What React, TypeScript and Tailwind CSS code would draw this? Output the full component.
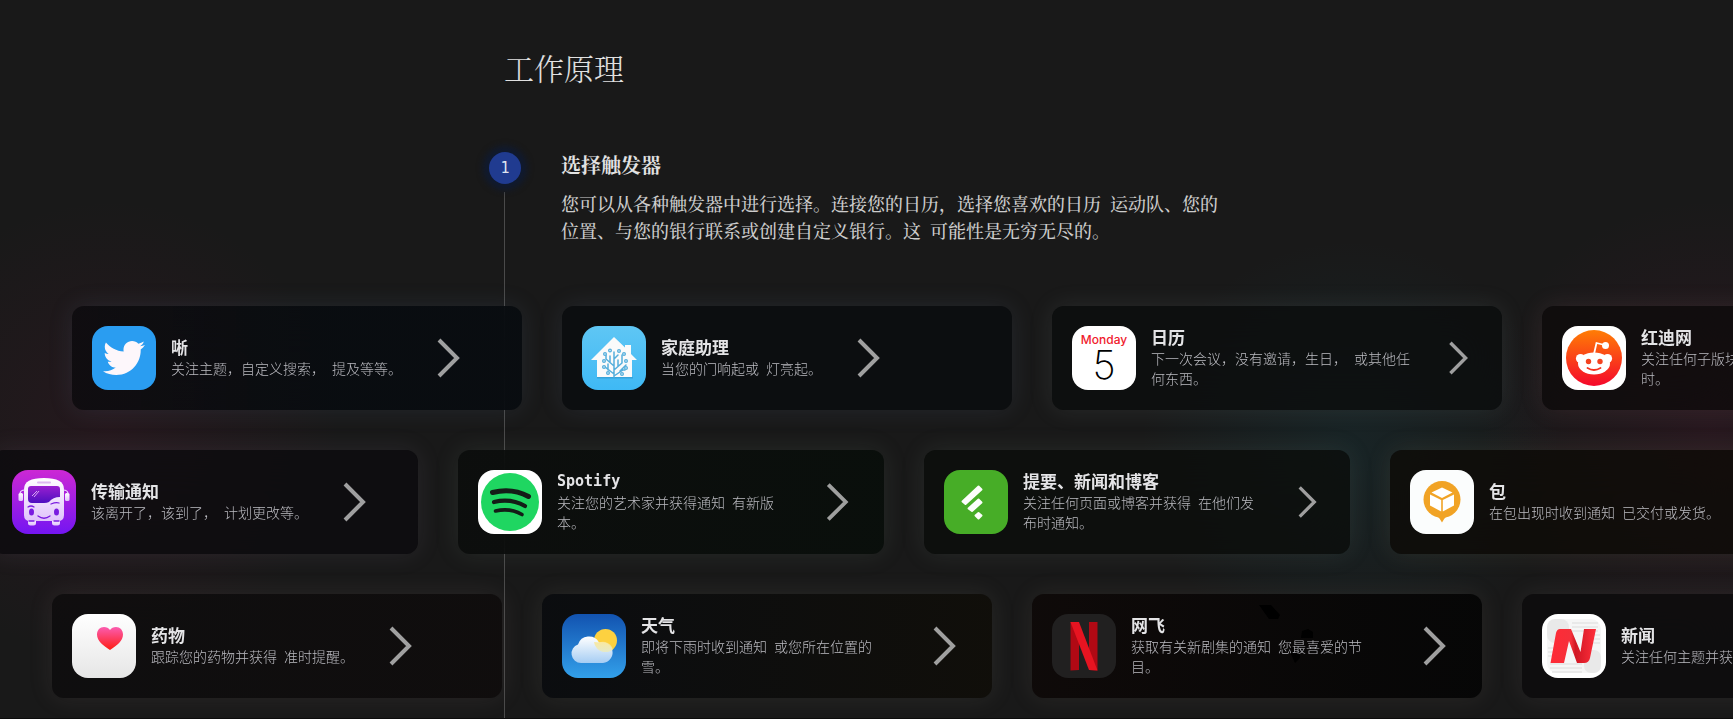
import type { ReactNode } from "react";
import { FaTwitter } from "react-icons/fa";

type Trigger = {
  title: string;
  text: string;
  icon: ReactNode;
  card: string;
  titleFont?: string;
  textWidth?: string;
  chevron?: string;
  decoration?: ReactNode;
};

const TwitterIcon = () => (
  <span className="flex size-16 items-center justify-center bg-[#2a9df1] text-[#fdf7fb]">
    <FaTwitter className="size-[42px]" />
  </span>
);

const HomeIcon = () => (
  <svg viewBox="0 0 64 64" className="size-16">
    <defs>
      <linearGradient id="home" x2="0" y2="1">
        <stop stopColor="#5fc6f4" />
        <stop offset="1" stopColor="#3fb9f5" />
      </linearGradient>
    </defs>
    <rect width="64" height="64" fill="url(#home)" />
    <path d="M15 51h36v1.500H15z" fill="#2b93c8" opacity=".6" />
    <path d="M32 11 L43 21.500 V19 H49 V28 L55 34 H50 V51 H15 V34 H9 Z" fill="#fafafa" />
    <g fill="none" stroke="#55aedb" strokeWidth="1.500" strokeLinecap="round">
      <path d="M32 51V26M32 40l-8-7v-4M32 48l-9-7h-2M32 44l8-7v-8M32 50l9-6h2M28 36v-6M36 40v-6M26 44v-6M38 45l6-6M32 33l4-4" />
    </g>
    <g fill="#d9effa" stroke="#55aedb" strokeWidth="1.200">
      <circle cx="28" cy="24.500" r="1.400" /><circle cx="37" cy="25" r="1.400" />
      <circle cx="23" cy="28" r="1.400" /><circle cx="42" cy="28" r="1.400" />
      <circle cx="22" cy="35" r="1.400" /><circle cx="44" cy="35" r="1.400" />
      <circle cx="22" cy="41" r="1.400" /><circle cx="44" cy="42" r="1.400" />
      <circle cx="26" cy="47" r="1.400" /><circle cx="40" cy="48" r="1.400" />
    </g>
  </svg>
);

const CalendarIcon = () => (
  <span className="flex size-16 flex-col items-center bg-white pt-1.5 font-['Liberation_Sans',sans-serif]">
    <span className="text-[12px] leading-4 font-medium font-[Inter,sans-serif] text-[#f0202c]">Monday</span>
    <span className="font-[Inter,sans-serif] text-[40px] leading-[34px] font-extralight text-black">5</span>
  </span>
);

const RedditIcon = () => (
  <svg viewBox="0 0 64 64" className="size-16">
    <defs>
      <linearGradient id="reddit" x2="0" y2="1">
        <stop stopColor="#ff7d05" />
        <stop offset="1" stopColor="#f5082b" />
      </linearGradient>
    </defs>
    <rect width="64" height="64" fill="#fff" />
    <circle cx="32" cy="32" r="28" fill="url(#reddit)" />
    <path d="M32 28l2.500-11 8 2" fill="none" stroke="#fff" strokeWidth="1.800" />
    <g fill="#fff">
      <circle cx="43.500" cy="19.500" r="3.500" />
      <circle cx="18.500" cy="32.500" r="4.600" />
      <circle cx="45.500" cy="32.500" r="4.600" />
      <ellipse cx="32" cy="37.500" rx="16" ry="11" />
    </g>
    <circle cx="26.500" cy="35.500" r="2.700" fill="#f4421f" />
    <circle cx="38" cy="35.500" r="2.700" fill="#f4421f" />
    <path d="M25.500 42q6.500 4 13 0" fill="none" stroke="#f4321f" strokeWidth="1.800" strokeLinecap="round" />
  </svg>
);

const BusIcon = () => (
  <svg viewBox="0 0 64 64" className="size-16">
    <defs>
      <linearGradient id="bus" x2="0" y2="1">
        <stop stopColor="#cc28d4" />
        <stop offset="1" stopColor="#7415f2" />
      </linearGradient>
      <linearGradient id="busBody" x2="0" y2="1">
        <stop stopColor="#fff" />
        <stop offset="1" stopColor="#e0c2fb" />
      </linearGradient>
      <linearGradient id="busGlass" x2="0" y2="1">
        <stop stopColor="#9a1fd0" />
        <stop offset="1" stopColor="#4e0fc0" />
      </linearGradient>
    </defs>
    <rect width="64" height="64" fill="url(#bus)" />
    <g fill="url(#busBody)">
      <path d="M16 48h8v5q0 2.500-2.500 2.500h-3q-2.500 0-2.500-2.500zM40 48h8v5q0 2.500-2.500 2.500h-3q-2.500 0-2.500-2.500z" />
      <path d="M12 19Q12 8 32 8T52 19V45Q52 51 46 51H18Q12 51 12 45Z" />
      <rect x="6.500" y="23" width="4.500" height="8" rx="1.500" />
      <rect x="53" y="23" width="4.500" height="8" rx="1.500" />
    </g>
    <path d="M13 20q-5 0-5 4M51 20q5 0 5 4" fill="none" stroke="#eedbff" strokeWidth="1.200" />
    <path d="M26 12.500h12" stroke="#ddb8f0" strokeWidth="2" strokeLinecap="round" />
    <path d="M16 19q0-3 3-3h26q3 0 3 3v8q-7 0-11 5-2 1-5 1H20q-4 0-4-4z" fill="url(#busGlass)" />
    <path d="M20 26l5-5M22 27l5-6" stroke="#d9a9f4" strokeWidth="1" />
    <g fill="#7a1be0">
      <ellipse cx="19.500" cy="42" rx="2.500" ry="3.600" />
      <ellipse cx="44.500" cy="42" rx="2.500" ry="3.600" />
    </g>
    <path d="M26 46q6 4.500 12 0M16 37q3-2 6 0M39 34q5-2 8-1M17 51h5M42 51h5" fill="none" stroke="#7a1be0" strokeWidth="1.300" strokeLinecap="round" />
  </svg>
);

const SpotifyIcon = () => (
  <svg viewBox="0 0 64 64" className="size-16">
    <rect width="64" height="64" fill="#fff" />
    <circle cx="32" cy="32" r="29" fill="#1fd661" />
    <g fill="none" stroke="#141d17" strokeLinecap="round">
      <path d="M14.500 22.500Q34 17.500 50.500 26.500" strokeWidth="5" />
      <path d="M16 32Q33 28 47 36" strokeWidth="4.300" />
      <path d="M17.500 41Q32 37.500 44 44.500" strokeWidth="3.600" />
    </g>
  </svg>
);

const FeedIcon = () => (
  <svg viewBox="0 0 64 64" className="size-16">
    <rect width="64" height="64" fill="#47ad27" />
    <g fill="#fcfefb" stroke="#fcfefb" strokeWidth="2" strokeLinejoin="round">
      <path d="M18.500 31.500L34.500 16.500L37.500 19.500L21.500 34Z" />
      <path d="M24.500 38.500L34.500 29.500L37.500 32.500L28 41Z" />
      <path d="M31.500 45.500L34.500 43L37.500 45.500L34.500 48.500Z" />
    </g>
  </svg>
);

const PackageIcon = () => (
  <svg viewBox="0 0 64 64" className="size-16">
    <rect width="64" height="64" fill="#fbfdfd" />
    <circle cx="32" cy="29.500" r="18.500" fill="#f1a325" />
    <path d="M22 43h20q-7 3-10 9.500q-3-6.500-10-9.500z" fill="#f1a325" />
    <g fill="#fff">
      <path d="M32 17.500l10.500 5L32 28l-10.500-5.500z" />
      <path d="M20 24.500l11.200 5.500v11.500L20 35.500z" />
      <path d="M44 24.500L32.800 30v11.500L44 35.500z" />
    </g>
  </svg>
);

const HealthIcon = () => (
  <svg viewBox="0 0 64 64" className="size-16">
    <defs>
      <linearGradient id="paper" x2="0" y2="1">
        <stop stopColor="#fff" />
        <stop offset="1" stopColor="#e6e6e6" />
      </linearGradient>
      <linearGradient id="heart" x2="0" y2="1">
        <stop stopColor="#fb5cb0" />
        <stop offset="1" stopColor="#fe1d12" />
      </linearGradient>
    </defs>
    <rect width="64" height="64" fill="url(#paper)" />
    <path d="M38 36C31 31.500 25 27 25 20.500C25 16 28 13 32 13C34.500 13 36.800 14.300 38 16C39.200 14.300 41.500 13 44 13C48 13 51 16 51 20.500C51 27 45 31.500 38 36Z" fill="url(#heart)" />
  </svg>
);

const WeatherIcon = () => (
  <svg viewBox="0 0 64 64" className="size-16">
    <defs>
      <linearGradient id="sky" x2="0" y2="1">
        <stop stopColor="#1253b0" />
        <stop offset="1" stopColor="#32a0ea" />
      </linearGradient>
      <linearGradient id="cloud" x2="0" y2="1">
        <stop stopColor="#fff" />
        <stop offset="1" stopColor="#a6cdf3" />
      </linearGradient>
      <clipPath id="sunClip"><circle cx="43.500" cy="26.500" r="11.500" /></clipPath>
      <linearGradient id="haze" x2="0" y2="1">
        <stop stopColor="#fce58a" />
        <stop offset="1" stopColor="#e8ecc4" />
      </linearGradient>
    </defs>
    <rect width="64" height="64" fill="url(#sky)" />
    <circle cx="43.500" cy="26.500" r="11.500" fill="#fdd140" />
    <path d="M19 49A9.500 9.500 0 0 1 16 30.500A11.500 11.500 0 0 1 37 28.500A10.500 10.500 0 1 1 41 49Z" fill="url(#cloud)" />
    <path d="M37 28.500A10.500 10.500 0 0 1 51 36V40H32V28Z" fill="url(#haze)" opacity=".8" clipPath="url(#sunClip)" />
  </svg>
);

const NetflixIcon = () => (
  <svg viewBox="0 0 64 64" className="size-16">
    <rect width="64" height="64" fill="#212020" />
    <path d="M18.500 8h8.500v48l-8.500 0.500zM37 8h8.500v48.500L37 56z" fill="#b10914" />
    <path d="M18.500 8H27l18.500 48.500L37 56z" fill="#e61421" />
  </svg>
);

const NewsIcon = () => (
  <svg viewBox="0 0 64 64" className="size-16">
    <defs>
      <linearGradient id="news" x2="1" y2="0">
        <stop stopColor="#ff2a36" />
        <stop offset=".45" stopColor="#f5303a" />
        <stop offset=".55" stopColor="#d01724" />
        <stop offset="1" stopColor="#ff2f3b" />
      </linearGradient>
    </defs>
    <rect width="64" height="64" fill="#fff" />
    <rect x="5" y="5" width="54" height="54" rx="10" fill="#f6f6f6" />
    <rect x="5" y="5" width="22" height="24" rx="8" fill="#e9e9e9" />
    <rect x="42" y="36" width="17" height="23" rx="7" fill="#e9e9e9" />
    <path d="M30 9h26M30 13h26M30 17h26M50 21h8M50 25h8M50 29h8M6 34h8M6 38h8M6 42h8M8 50h32M8 54h32M10 58h30" stroke="#dcdcdc" strokeWidth="1.200" />
    <path d="M18 15H29L38.500 38L42 15H54L48 44Q47 49 42 49H35L27 27L22 49H8.500L14 19Q15 15 18 15Z" fill="url(#news)" />
  </svg>
);

const Flecks = () => (
  <svg viewBox="0 0 60 64" className="absolute top-2 left-[226px] -z-10 h-16 w-[60px]" aria-hidden="true">
    <path d="M1 3h12l9 10-2 4h-9zM44 29l6-2 5 3v6H43zM32 50l10-2v8l-5 5z" fill="#000" />
  </svg>
);

const rows: { offset: string; cardWidth: string; items: Trigger[] }[] = [
  {
    offset: "ml-[72px]",
    cardWidth: "w-[450px]",
    items: [
      { title: "唽", text: "关注主题，自定义搜索，\u2002提及等等。", icon: <TwitterIcon />, card: "bg-linear-to-r from-[#0c0b0e]/80 to-[#080c10]/90 to-60% shadow-[0_0_24px_rgba(100,130,160,0.15)]" },
      { title: "家庭助理", text: "当您的门响起或\u2002灯亮起。", icon: <HomeIcon />, card: "bg-[#0b0d10]/90 shadow-[0_0_24px_rgba(110,130,160,0.15)]" },
      { title: "日历", text: "下一次会议，没有邀请，生日，\u2002或其他任何东西。", icon: <CalendarIcon />, card: "bg-[#0a0c0c]/75 shadow-[0_0_24px_rgba(140,155,155,0.14)]", textWidth: "w-[266px]", chevron: "size-[54px]" },
      { title: "红迪网", text: "关注任何子版块并获得通知\u2002有新帖子发布时。", icon: <RedditIcon />, card: "bg-[#0c0808]/70 shadow-[0_0_24px_rgba(160,120,120,0.14)]", textWidth: "w-[266px]", chevron: "size-[54px]" },
    ],
  },
  {
    offset: "-ml-2",
    cardWidth: "w-[426px]",
    items: [
      { title: "传输通知", text: "该离开了，该到了，\u2002计划更改等。", icon: <BusIcon />, card: "bg-[#0b0a0e]/75 shadow-[0_0_24px_rgba(140,130,155,0.14)]" },
      { title: "Spotify", titleFont: "font-['DejaVu_Sans_Mono',monospace] text-[15px]", text: "关注您的艺术家并获得通知\u2002有新版本。", icon: <SpotifyIcon />, card: "bg-linear-to-r from-[#0b0d0c]/85 to-[#080e0a]/85 shadow-[0_0_24px_rgba(120,145,130,0.15)]", textWidth: "w-[235px]", chevron: "size-[62px]" },
      { title: "提要、新闻和博客", text: "关注任何页面或博客并获得\u2002在他们发布时通知。", icon: <FeedIcon />, card: "bg-[#0a0c0a]/75 shadow-[0_0_24px_rgba(130,150,135,0.15)]", textWidth: "w-[244px]", chevron: "size-[52px]" },
      { title: "包", text: "在包出现时收到通知\u2002已交付或发货。", icon: <PackageIcon />, card: "bg-[#0c0a06]/75 shadow-[0_0_24px_rgba(150,140,105,0.15)]" },
    ],
  },
  {
    offset: "ml-[52px]",
    cardWidth: "w-[450px]",
    items: [
      { title: "药物", text: "跟踪您的药物并获得\u2002准时提醒。", icon: <HealthIcon />, card: "bg-linear-to-r from-[#0e0d0e]/85 to-[#0f0c0c]/85 shadow-[0_0_24px_rgba(150,130,130,0.14)]" },
      { title: "天气", text: "即将下雨时收到通知\u2002或您所在位置的雪。", icon: <WeatherIcon />, card: "bg-linear-to-r from-[#0a0c0f]/90 to-[#100e09]/90 shadow-[0_0_24px_rgba(140,140,125,0.14)]", textWidth: "w-[257px]" },
      { title: "网飞", text: "获取有关新剧集的通知\u2002您最喜爱的节目。", icon: <NetflixIcon />, card: "bg-linear-to-r from-[#0e0908]/90 to-[#050505]/90 shadow-[0_0_24px_rgba(145,125,115,0.14)]", textWidth: "w-[257px]", decoration: <Flecks /> },
      { title: "新闻", text: "关注任何主题并获得\u2002最新消息。", icon: <NewsIcon />, card: "bg-[#0d0c0d]/85 shadow-[0_0_24px_rgba(140,130,130,0.14)]" },
    ],
  },
];

function Chevron({ size }: { size: string }) {
  return (
    <svg viewBox="0 0 512 512" className={`ml-3.5 shrink-0 text-[#b0b0b0]/90 ${size}`} aria-hidden="true">
      <path d="M184 112l144 144-144 144" fill="none" stroke="currentColor" strokeWidth="32" />
    </svg>
  );
}

function TriggerCard({ item, width }: { item: Trigger; width: string }) {
  return (
    <article className={`relative isolate flex h-[104px] shrink-0 items-center rounded-xl px-5 backdrop-blur-xl ${width} ${item.card}`}>
      {item.decoration}
      <div className="mr-[15px] size-16 shrink-0 overflow-hidden rounded-2xl">{item.icon}</div>
      <div className={`shrink-0 pb-0.5 ${item.textWidth ?? ""}`}>
        <h3 className={`leading-[22px] font-bold text-[#e4e4e6] ${item.titleFont ?? "text-[17px]"}`}>{item.title}</h3>
        <p className="font-['Noto_Sans_CJK_SC_Light','Noto_Sans_CJK_SC',sans-serif] text-[14px] leading-5 font-light text-[#bcbcc2]">{item.text}</p>
      </div>
      <Chevron size={item.chevron ?? "size-16"} />
    </article>
  );
}

export default function App() {
  return (
    <main
      lang="zh-CN"
      className="relative isolate min-h-screen overflow-hidden border-b border-[#0c0c0c] bg-[#191919] bg-[radial-gradient(circle_230px_at_110px_430px,rgba(120,20,60,0.13),transparent),radial-gradient(circle_210px_at_1350px_450px,rgba(20,110,125,0.13),transparent),radial-gradient(circle_230px_at_1710px_430px,rgba(130,20,70,0.14),transparent)] pb-5 font-['Noto_Sans_Mono_CJK_SC','Noto_Sans_CJK_SC',sans-serif]"
    >
      <div className="absolute inset-x-0 top-[192px] bottom-0 -z-10 mx-auto max-w-[725px] border-l border-[#4a4a4a]" />

      <section className="mx-auto max-w-[725px] font-['Noto_Serif_CJK_SC','Noto_Sans_CJK_SC',serif]">
        <h1 className="pt-[45px] text-[30px] leading-[44px] font-light text-[#e0e0e0]">工作原理</h1>
        <div className="mt-[63px] -ml-[15px] flex gap-10">
          <span className="flex size-8 shrink-0 items-center justify-center rounded-full bg-[#203b90] font-['DejaVu_Sans_Mono',monospace] text-[15px] leading-none text-[#dfe3f0] shadow-[0_0_6px_6px_#101a30]">
            1
          </span>
          <div>
            <h2 className="text-[20px] leading-[25px] font-bold text-[#e2e2e2]">选择触发器</h2>
            <p className="mt-[13px] text-[18px] leading-[27px] font-medium text-[#cccccc]">
              您可以从各种触发器中进行选择。连接您的日历，选择您喜欢的日历&ensp;运动队、您的位置、与您的银行联系或创建自定义银行。这&ensp;可能性是无穷无尽的。
            </p>
          </div>
        </div>
      </section>

      <section className="mt-[62px] flex flex-col gap-10">
        {rows.map((row) => (
          <div key={row.offset} className={`flex gap-10 ${row.offset}`}>
            {row.items.map((item) => (
              <TriggerCard key={item.title} item={item} width={row.cardWidth} />
            ))}
          </div>
        ))}
      </section>
    </main>
  );
}
